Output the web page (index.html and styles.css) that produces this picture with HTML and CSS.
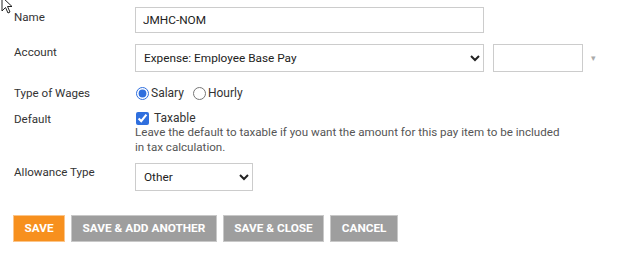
FILE: index.html
```html
<!DOCTYPE html>
<html lang="en">
<head>
  <meta charset="UTF-8">
  <title>Pay Item</title>
  <link rel="stylesheet" href="styles.css">
</head>
<body>
  <svg class="cursor" width="14" height="20" viewBox="0 0 14 20">
    <path d="M1 1 L1 15 L4.5 11.5 L7 17 L9 16 L6.5 10.5 L11 10.5 Z" fill="#fff" stroke="#222" stroke-width="1"/>
  </svg>

  <form class="pay-form">
    <div class="row row-name">
      <label class="label">Name</label>
      <div class="field">
        <input type="text" class="text-input wide" value="JMHC-NOM">
      </div>
    </div>

    <div class="row row-account">
      <label class="label">Account</label>
      <div class="field inline">
        <select class="select wide">
          <option>Expense: Employee Base Pay</option>
        </select>
        <input type="text" class="text-input small">
        <span class="caret">&#9662;</span>
      </div>
    </div>

    <div class="row row-wages">
      <label class="label">Type of Wages</label>
      <div class="field inline">
        <label class="choice"><input type="radio" name="wages" checked> Salary</label>
        <label class="choice"><input type="radio" name="wages"> Hourly</label>
      </div>
    </div>

    <div class="row row-default">
      <label class="label">Default</label>
      <div class="field">
        <label class="choice check"><input type="checkbox" checked> Taxable</label>
        <p class="help">Leave the default to taxable if you want the amount for this pay item to be included in tax calculation.</p>
      </div>
    </div>

    <div class="row row-allowance">
      <label class="label">Allowance Type</label>
      <div class="field">
        <select class="select short">
          <option>Other</option>
        </select>
      </div>
    </div>

    <div class="actions">
      <button type="button" class="btn btn-primary">Save</button>
      <button type="button" class="btn">Save &amp; Add Another</button>
      <button type="button" class="btn">Save &amp; Close</button>
      <button type="button" class="btn">Cancel</button>
    </div>
  </form>
</body>
</html>
```

FILE: styles.css
```css
body {
  margin: 0;
  font-family: Roboto, "Liberation Sans", sans-serif;
  font-size: 11.6px;
  color: #333;
  background: #fff;
}
.cursor {
  position: absolute;
  left: 1px;
  top: -4px;
}
.pay-form {
  padding: 7px 0 0 14px;
}
.row {
  display: grid;
  grid-template-columns: 121px 1fr;
  align-items: start;
}
.label {
  padding-top: 2px;
  line-height: 16px;
}
.row-account {
  margin-top: 11px;
}
.row-account .label {
  padding-top: 0;
}
.row-wages {
  margin-top: 13px;
  align-items: center;
}
.row-wages .label {
  padding-top: 0;
}
.row-default {
  margin-top: 10px;
}
.row-default .label {
  padding-top: 0;
}
.row-allowance {
  margin-top: 7px;
}
.row-allowance .label {
  padding-top: 1px;
}
.field.inline {
  display: flex;
  align-items: center;
}
.text-input, .select {
  box-sizing: border-box;
  font-family: Roboto, "Liberation Sans", sans-serif;
  font-size: 11.8px;
  color: #222;
  border: 1px solid #ccc;
  border-radius: 0;
  background: #fff;
  padding: 0 7px;
  margin: 0;
}
.text-input {
  height: 26px;
}
.select {
  height: 28px;
  padding-left: 4px;
}
.wide {
  width: 349px;
}
.small {
  width: 90px;
  height: 28px;
  margin-left: 9px;
}
.caret {
  margin-left: 8px;
  color: #aaa;
  font-size: 9px;
}
.short {
  width: 118px;
}
.choice {
  display: inline-flex;
  align-items: center;
  font-size: 12px;
  margin-right: 8px;
}
.choice input {
  margin: 0 2px 0 1px;
  width: 13px;
  height: 13px;
  accent-color: #2f6fde;
}
.check input {
  margin-right: 5px;
}
.help {
  margin: -3px 0 0 0;
  font-size: 11.6px;
  line-height: 15.5px;
  color: #555;
  width: 434px;
}
.actions {
  display: flex;
  gap: 6px;
  margin-top: 24px;
  margin-left: -1px;
}
.btn {
  height: 27px;
  padding: 0 10.5px;
  border: 1px solid #c8c8c8;
  background: #9e9e9e;
  color: #fff;
  font-family: Roboto, "Liberation Sans", sans-serif;
  font-size: 11.8px;
  font-weight: 700;
  text-transform: uppercase;
  cursor: pointer;
}
.btn-primary {
  background: #f7901e;
  border-color: #fbc58a;
}
```
